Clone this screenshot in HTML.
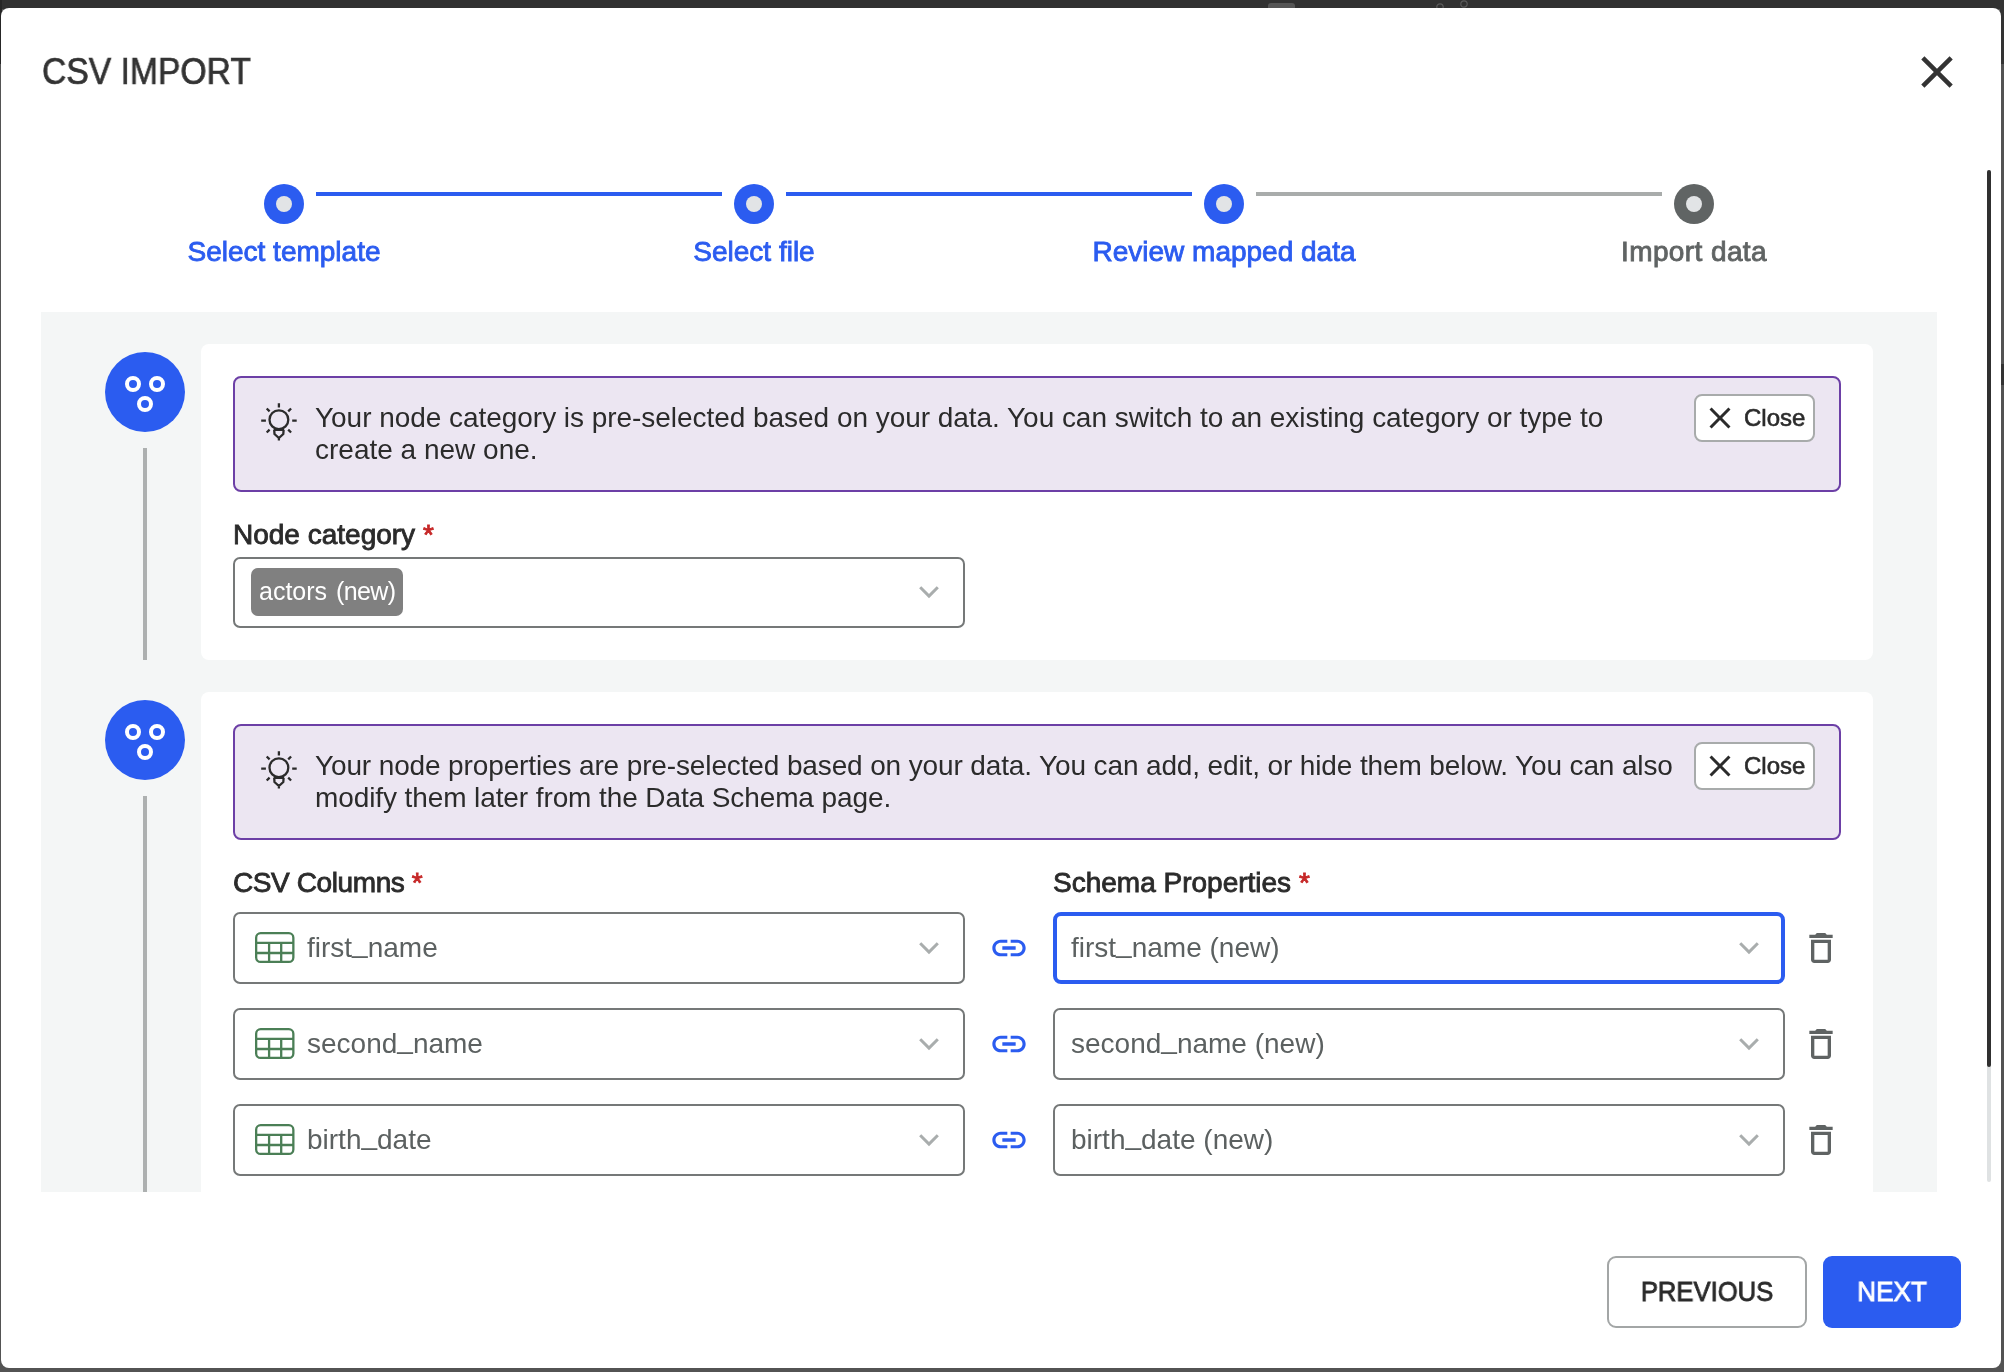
<!DOCTYPE html>
<html><head><meta charset="utf-8">
<style>
*{box-sizing:border-box;margin:0;padding:0}
html,body{width:2004px;height:1372px;overflow:hidden}
body{background:#535353;font-family:"Liberation Sans",sans-serif;position:relative;color:#2b2b2b}
div,span,svg{position:absolute}
.t{white-space:nowrap;line-height:1;will-change:transform}
.g{will-change:transform}
.med{-webkit-text-stroke:0.85px currentColor}
</style></head><body>

<div style="left:0;top:0;width:2004px;height:9px;background:#313131"></div>
<div style="left:0;top:0;width:2px;height:64px;background:#262626"></div>
<div style="left:2000px;top:0;width:4px;height:64px;background:#333"></div>
<div style="left:1268px;top:3px;width:27px;height:8px;border-radius:3px;background:#555"></div>
<svg style="left:1430px;top:0" width="44" height="10" viewBox="0 0 44 10"><circle cx="10" cy="7" r="3.2" fill="none" stroke="#5a5a5a" stroke-width="1.2"/><circle cx="34" cy="4" r="3.2" fill="none" stroke="#5a5a5a" stroke-width="1.2"/></svg>
<div style="left:2001px;top:364px;width:3px;height:21px;background:#333"></div>
<div style="left:1px;top:8px;width:2000px;height:1360px;background:#fff;border-radius:8px"></div>
<div class="t" style="left:42px;top:54px;font-size:36px;color:#333;-webkit-text-stroke:0.7px #333;transform:scaleX(0.935);transform-origin:0 0">CSV IMPORT</div>
<svg style="left:1910px;top:45px" width="54" height="54" viewBox="0 0 24 24"><path fill="#333" d="M19 6.41L17.59 5 12 10.59 6.41 5 5 6.41 10.59 12 5 17.59 6.41 19 12 13.41 17.59 19 19 17.59 13.41 12z"/></svg>
<div style="left:1987px;top:170px;width:4px;height:1012px;border-radius:2px;background:#dfe2e3"></div>
<div style="left:1987px;top:170px;width:4px;height:897px;border-radius:2px;background:#303030"></div>
<div style="left:264px;top:184px;width:40px;height:40px;border-radius:50%;background:#2b5cf0"></div>
<div style="left:276px;top:196px;width:16px;height:16px;border-radius:50%;background:#e2e4e6"></div>
<div class="t med" style="left:84px;width:400px;text-align:center;top:237.5px;font-size:28px;color:#2b5cf0;letter-spacing:0px">Select template</div>
<div style="left:316px;top:192px;width:406px;height:4px;background:#2b5cf0"></div>
<div style="left:734px;top:184px;width:40px;height:40px;border-radius:50%;background:#2b5cf0"></div>
<div style="left:746px;top:196px;width:16px;height:16px;border-radius:50%;background:#e2e4e6"></div>
<div class="t med" style="left:554px;width:400px;text-align:center;top:237.5px;font-size:28px;color:#2b5cf0;letter-spacing:0px">Select file</div>
<div style="left:786px;top:192px;width:406px;height:4px;background:#2b5cf0"></div>
<div style="left:1204px;top:184px;width:40px;height:40px;border-radius:50%;background:#2b5cf0"></div>
<div style="left:1216px;top:196px;width:16px;height:16px;border-radius:50%;background:#e2e4e6"></div>
<div class="t med" style="left:1024px;width:400px;text-align:center;top:237.5px;font-size:28px;color:#2b5cf0;letter-spacing:0px">Review mapped data</div>
<div style="left:1256px;top:192px;width:406px;height:4px;background:#a9acab"></div>
<div style="left:1674px;top:184px;width:40px;height:40px;border-radius:50%;background:#606464"></div>
<div style="left:1686px;top:196px;width:16px;height:16px;border-radius:50%;background:#e2e4e6"></div>
<div class="t med" style="left:1494px;width:400px;text-align:center;top:237.5px;font-size:28px;color:#606464;letter-spacing:0.4px">Import data</div>
<div style="left:41px;top:312px;width:1896px;height:880px;background:#f4f6f6;overflow:hidden">
<svg style="left:64px;top:40px" width="80" height="80" viewBox="0 0 80 80"><circle cx="40" cy="40" r="40" fill="#2b5cf0"/><circle cx="28" cy="32" r="6" fill="none" stroke="#fff" stroke-width="4"/><circle cx="52" cy="32" r="6" fill="none" stroke="#fff" stroke-width="4"/><circle cx="40" cy="52" r="6" fill="none" stroke="#fff" stroke-width="4"/></svg>
<div style="left:102px;top:136px;width:4px;height:212px;background:#adb0b0"></div>
<div style="left:160px;top:32px;width:1672px;height:316px;background:#fff;border-radius:8px"></div>
<div style="left:192px;top:64px;width:1608px;height:116px;background:#ece6f2;border:2px solid #6c3fa6;border-radius:8px"></div>
<svg style="left:214px;top:83px" width="50" height="50" viewBox="0 0 50 50" fill="none" stroke="#2b2b2b" stroke-width="2.3"><circle cx="23.9" cy="24.7" r="9.4"/><path d="M23.9 8.2V12.6M6.2 25.7H10.9M37.2 25.7H41.7M11.7 13.5L14.6 16.4M36.1 13.5L33.2 16.4M11.7 37.5L14.6 34.7M36.1 37.5L33.2 34.7M18.6 34.9H29.2M19.2 34.9L19.5 39L23.9 43L28.3 39L28.6 34.9M23.9 42.5V45.5"/></svg>
<div class="g" style="left:274px;top:90px;font-size:28px;line-height:32px;white-space:nowrap;color:#2b2b2b"><span style="position:static;letter-spacing:-0.04px">Your node category is pre-selected based on your data. You can switch to an existing category or type to</span><br><span style="position:static;letter-spacing:0px">create a new one.</span></div>
<div style="left:1653px;top:82px;width:121px;height:48px;background:#fff;border:2px solid #a8abab;border-radius:8px"></div>
<svg style="left:1661px;top:88px" width="36" height="36" viewBox="0 0 24 24"><path fill="#2b2b2b" d="M19 6.41L17.59 5 12 10.59 6.41 5 5 6.41 10.59 12 5 17.59 6.41 19 12 13.41 17.59 19 19 17.59 13.41 12z"/></svg>
<div class="t med" style="left:1703px;top:94px;font-size:24px;color:#2b2b2b;-webkit-text-stroke:0.6px #2b2b2b">Close</div>
<div class="t med" style="left:192px;top:209px;font-size:28px;color:#2b2b2b;letter-spacing:0px">Node category <span style="position:static;color:#c62828">*</span></div>
<div style="left:192px;top:245px;width:732px;height:71px;background:#fff;border:2px solid #757878;border-radius:7px"></div>
<div style="left:210px;top:256px;width:152px;height:48px;background:#808080;border-radius:7px"></div>
<div class="t" style="left:218px;top:267px;font-size:25px;color:#fff">actors</div>
<div class="t" style="left:294.5px;top:267px;font-size:25px;letter-spacing:-0.6px;color:#fff">(new)</div>
<svg style="left:876px;top:268px" width="24" height="24" viewBox="0 0 24 24"><path d="M3.2 7.3L12 16.1L20.8 7.3" fill="none" stroke="#a9adad" stroke-width="3"/></svg>
<svg style="left:64px;top:388px" width="80" height="80" viewBox="0 0 80 80"><circle cx="40" cy="40" r="40" fill="#2b5cf0"/><circle cx="28" cy="32" r="6" fill="none" stroke="#fff" stroke-width="4"/><circle cx="52" cy="32" r="6" fill="none" stroke="#fff" stroke-width="4"/><circle cx="40" cy="52" r="6" fill="none" stroke="#fff" stroke-width="4"/></svg>
<div style="left:102px;top:484px;width:4px;height:500px;background:#adb0b0"></div>
<div style="left:160px;top:380px;width:1672px;height:700px;background:#fff;border-radius:8px"></div>
<div style="left:192px;top:412px;width:1608px;height:116px;background:#ece6f2;border:2px solid #6c3fa6;border-radius:8px"></div>
<svg style="left:214px;top:431px" width="50" height="50" viewBox="0 0 50 50" fill="none" stroke="#2b2b2b" stroke-width="2.3"><circle cx="23.9" cy="24.7" r="9.4"/><path d="M23.9 8.2V12.6M6.2 25.7H10.9M37.2 25.7H41.7M11.7 13.5L14.6 16.4M36.1 13.5L33.2 16.4M11.7 37.5L14.6 34.7M36.1 37.5L33.2 34.7M18.6 34.9H29.2M19.2 34.9L19.5 39L23.9 43L28.3 39L28.6 34.9M23.9 42.5V45.5"/></svg>
<div class="g" style="left:274px;top:438px;font-size:28px;line-height:32px;white-space:nowrap;color:#2b2b2b"><span style="position:static;letter-spacing:-0.13px">Your node properties are pre-selected based on your data. You can add, edit, or hide them below. You can also</span><br><span style="position:static;letter-spacing:-0.1px">modify them later from the Data Schema page.</span></div>
<div style="left:1653px;top:430px;width:121px;height:48px;background:#fff;border:2px solid #a8abab;border-radius:8px"></div>
<svg style="left:1661px;top:436px" width="36" height="36" viewBox="0 0 24 24"><path fill="#2b2b2b" d="M19 6.41L17.59 5 12 10.59 6.41 5 5 6.41 10.59 12 5 17.59 6.41 19 12 13.41 17.59 19 19 17.59 13.41 12z"/></svg>
<div class="t med" style="left:1703px;top:442px;font-size:24px;color:#2b2b2b;-webkit-text-stroke:0.6px #2b2b2b">Close</div>
<div class="t med" style="left:192px;top:557px;font-size:28px;color:#2b2b2b;letter-spacing:-0.4px">CSV Columns <span style="position:static;color:#c62828">*</span></div>
<div class="t med" style="left:1012px;top:557px;font-size:28px;color:#2b2b2b;letter-spacing:0px">Schema Properties <span style="position:static;color:#c62828">*</span></div>
<div style="left:192px;top:600px;width:732px;height:72px;background:#fff;border:2px solid #757878;border-radius:7px"></div>
<svg style="left:214px;top:620px" width="40" height="32" viewBox="0 0 40 32" fill="none" stroke="#4b7f56" stroke-width="2.3"><rect x="1.15" y="1.15" width="37.2" height="28.8" rx="4.5"/><path d="M1 10.9H39M1 21H39M14.1 10.9V30M26.2 10.9V30"/></svg>
<div class="t" style="left:266px;top:622px;font-size:28px;color:#5c6161">first<span style="position:relative;top:-5px">_</span>name</div>
<svg style="left:876px;top:624px" width="24" height="24" viewBox="0 0 24 24"><path d="M3.2 7.3L12 16.1L20.8 7.3" fill="none" stroke="#a9adad" stroke-width="3"/></svg>
<svg style="left:948px;top:616px" width="40" height="40" viewBox="0 0 24 24"><path fill="#2b5cf0" d="M3.9 12c0-1.71 1.39-3.1 3.1-3.1h4V7H7c-2.76 0-5 2.24-5 5s2.24 5 5 5h4v-1.9H7c-1.71 0-3.1-1.39-3.1-3.1zM8 13h8v-2H8v2zm9-6h-4v1.9h4c1.71 0 3.1 1.39 3.1 3.1s-1.39 3.1-3.1 3.1h-4V17h4c2.76 0 5-2.24 5-5s-2.24-5-5-5z"/></svg>
<div style="left:1012px;top:600px;width:732px;height:72px;background:#fff;border:4px solid #2b5cf0;border-radius:8px"></div>
<div class="t" style="left:1030px;top:622px;font-size:28px;color:#5c6161">first<span style="position:relative;top:-5px">_</span>name (new)</div>
<svg style="left:1696px;top:624px" width="24" height="24" viewBox="0 0 24 24"><path d="M3.2 7.3L12 16.1L20.8 7.3" fill="none" stroke="#a9adad" stroke-width="3"/></svg>
<svg style="left:1760px;top:616px" width="40" height="40" viewBox="0 0 24 24"><path fill="#5f6363" d="M16 9v10H8V9h8m-1.5-6h-5l-1 1H5v2h14V4h-3.5l-1-1zM18 7H6v12c0 1.1.9 2 2 2h8c1.1 0 2-.9 2-2V7z"/></svg>
<div style="left:192px;top:696px;width:732px;height:72px;background:#fff;border:2px solid #757878;border-radius:7px"></div>
<svg style="left:214px;top:716px" width="40" height="32" viewBox="0 0 40 32" fill="none" stroke="#4b7f56" stroke-width="2.3"><rect x="1.15" y="1.15" width="37.2" height="28.8" rx="4.5"/><path d="M1 10.9H39M1 21H39M14.1 10.9V30M26.2 10.9V30"/></svg>
<div class="t" style="left:266px;top:718px;font-size:28px;color:#5c6161">second<span style="position:relative;top:-5px">_</span>name</div>
<svg style="left:876px;top:720px" width="24" height="24" viewBox="0 0 24 24"><path d="M3.2 7.3L12 16.1L20.8 7.3" fill="none" stroke="#a9adad" stroke-width="3"/></svg>
<svg style="left:948px;top:712px" width="40" height="40" viewBox="0 0 24 24"><path fill="#2b5cf0" d="M3.9 12c0-1.71 1.39-3.1 3.1-3.1h4V7H7c-2.76 0-5 2.24-5 5s2.24 5 5 5h4v-1.9H7c-1.71 0-3.1-1.39-3.1-3.1zM8 13h8v-2H8v2zm9-6h-4v1.9h4c1.71 0 3.1 1.39 3.1 3.1s-1.39 3.1-3.1 3.1h-4V17h4c2.76 0 5-2.24 5-5s-2.24-5-5-5z"/></svg>
<div style="left:1012px;top:696px;width:732px;height:72px;background:#fff;border:2px solid #757878;border-radius:7px"></div>
<div class="t" style="left:1030px;top:718px;font-size:28px;color:#5c6161">second<span style="position:relative;top:-5px">_</span>name (new)</div>
<svg style="left:1696px;top:720px" width="24" height="24" viewBox="0 0 24 24"><path d="M3.2 7.3L12 16.1L20.8 7.3" fill="none" stroke="#a9adad" stroke-width="3"/></svg>
<svg style="left:1760px;top:712px" width="40" height="40" viewBox="0 0 24 24"><path fill="#5f6363" d="M16 9v10H8V9h8m-1.5-6h-5l-1 1H5v2h14V4h-3.5l-1-1zM18 7H6v12c0 1.1.9 2 2 2h8c1.1 0 2-.9 2-2V7z"/></svg>
<div style="left:192px;top:792px;width:732px;height:72px;background:#fff;border:2px solid #757878;border-radius:7px"></div>
<svg style="left:214px;top:812px" width="40" height="32" viewBox="0 0 40 32" fill="none" stroke="#4b7f56" stroke-width="2.3"><rect x="1.15" y="1.15" width="37.2" height="28.8" rx="4.5"/><path d="M1 10.9H39M1 21H39M14.1 10.9V30M26.2 10.9V30"/></svg>
<div class="t" style="left:266px;top:814px;font-size:28px;color:#5c6161">birth<span style="position:relative;top:-5px">_</span>date</div>
<svg style="left:876px;top:816px" width="24" height="24" viewBox="0 0 24 24"><path d="M3.2 7.3L12 16.1L20.8 7.3" fill="none" stroke="#a9adad" stroke-width="3"/></svg>
<svg style="left:948px;top:808px" width="40" height="40" viewBox="0 0 24 24"><path fill="#2b5cf0" d="M3.9 12c0-1.71 1.39-3.1 3.1-3.1h4V7H7c-2.76 0-5 2.24-5 5s2.24 5 5 5h4v-1.9H7c-1.71 0-3.1-1.39-3.1-3.1zM8 13h8v-2H8v2zm9-6h-4v1.9h4c1.71 0 3.1 1.39 3.1 3.1s-1.39 3.1-3.1 3.1h-4V17h4c2.76 0 5-2.24 5-5s-2.24-5-5-5z"/></svg>
<div style="left:1012px;top:792px;width:732px;height:72px;background:#fff;border:2px solid #757878;border-radius:7px"></div>
<div class="t" style="left:1030px;top:814px;font-size:28px;color:#5c6161">birth<span style="position:relative;top:-5px">_</span>date (new)</div>
<svg style="left:1696px;top:816px" width="24" height="24" viewBox="0 0 24 24"><path d="M3.2 7.3L12 16.1L20.8 7.3" fill="none" stroke="#a9adad" stroke-width="3"/></svg>
<svg style="left:1760px;top:808px" width="40" height="40" viewBox="0 0 24 24"><path fill="#5f6363" d="M16 9v10H8V9h8m-1.5-6h-5l-1 1H5v2h14V4h-3.5l-1-1zM18 7H6v12c0 1.1.9 2 2 2h8c1.1 0 2-.9 2-2V7z"/></svg>
</div>
<div style="left:1607px;top:1256px;width:200px;height:72px;border:2px solid #a3a6a6;border-radius:9px;background:#fff"></div>
<div class="t med" style="left:1607px;width:200px;text-align:center;top:1268px;line-height:48px;font-size:28px;color:#2b2b2b;transform:scaleX(0.915)">PREVIOUS</div>
<div style="left:1823px;top:1256px;width:138px;height:72px;border-radius:9px;background:#2b5cf0"></div>
<div class="t med" style="left:1823px;width:138px;text-align:center;top:1268px;line-height:48px;font-size:28px;color:#fff;transform:scaleX(0.935)">NEXT</div>
</body></html>
